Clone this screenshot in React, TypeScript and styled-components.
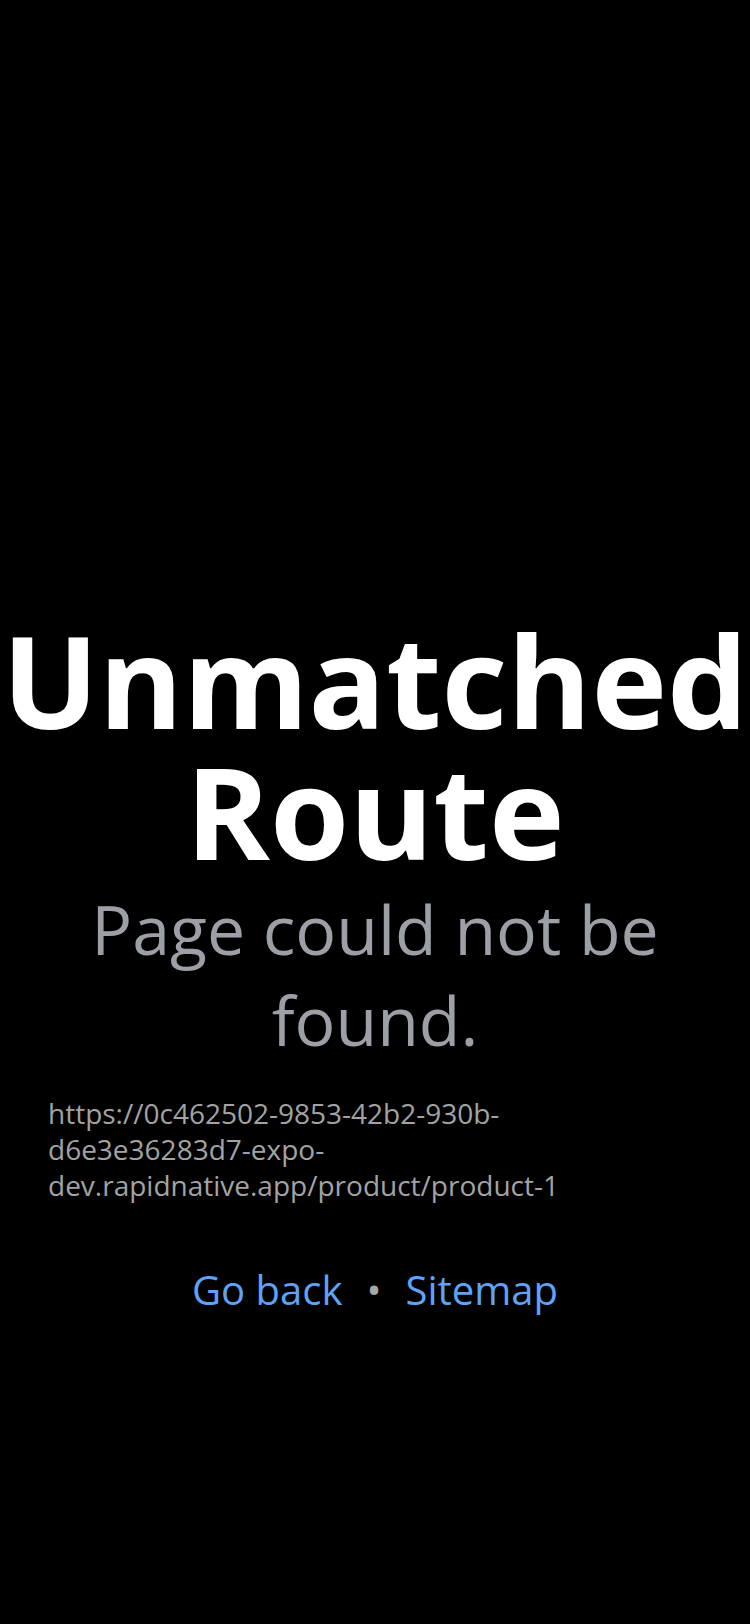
import styled, { createGlobalStyle } from 'styled-components';

const GlobalStyle = createGlobalStyle`
  html,
  body {
    margin: 0;
    padding: 0;
    background-color: #000000;
  }
  #root {
    min-height: 100vh;
  }
`;

const App = () => {
  const url =
    'https://0c462502-9853-42b2-930b-d6e3e36283d7-expo-dev.rapidnative.app/product/product-1';

  return (
    <>
      <GlobalStyle />
      <Screen>
        <Title>Unmatched Route</Title>
        <Subtitle>Page could not be found.</Subtitle>
        <UrlText>{url}</UrlText>
        <LinkRow>
          <LinkText href="#">Go back</LinkText>
          <Separator>•</Separator>
          <LinkText href="#">Sitemap</LinkText>
        </LinkRow>
      </Screen>
    </>
  );
};

export default App;

const Screen = styled.main`
  min-height: 100vh;
  box-sizing: border-box;
  display: flex;
  flex-direction: column;
  align-items: center;
  padding: 614px 48px 0;
  background-color: #000000;
  font-family: 'Open Sans', 'Noto Sans', sans-serif;
`;

const Title = styled.h1`
  margin: 0 -48px;
  width: calc(100% + 96px);
  text-align: center;
  font-size: 128px;
  line-height: 131px;
  font-weight: 700;
  color: #ffffff;
`;

const Subtitle = styled.p`
  margin: 7px 0 0;
  text-align: center;
  font-size: 68px;
  line-height: 91px;
  font-weight: 400;
  color: #9ca0a6;
`;

const UrlText = styled.p`
  margin: 30px 0 0;
  align-self: stretch;
  text-align: left;
  font-size: 28px;
  line-height: 36px;
  font-weight: 400;
  color: #a3a3a3;
`;

const LinkRow = styled.nav`
  margin-top: 59px;
  display: flex;
  align-items: center;
  gap: 24px;
  font-size: 40px;
  line-height: 56px;
  font-weight: 400;
`;

const LinkText = styled.a`
  color: #5ea3f5;
  text-decoration: none;
`;

const Separator = styled.span`
  color: #a8a8a8;
`;
